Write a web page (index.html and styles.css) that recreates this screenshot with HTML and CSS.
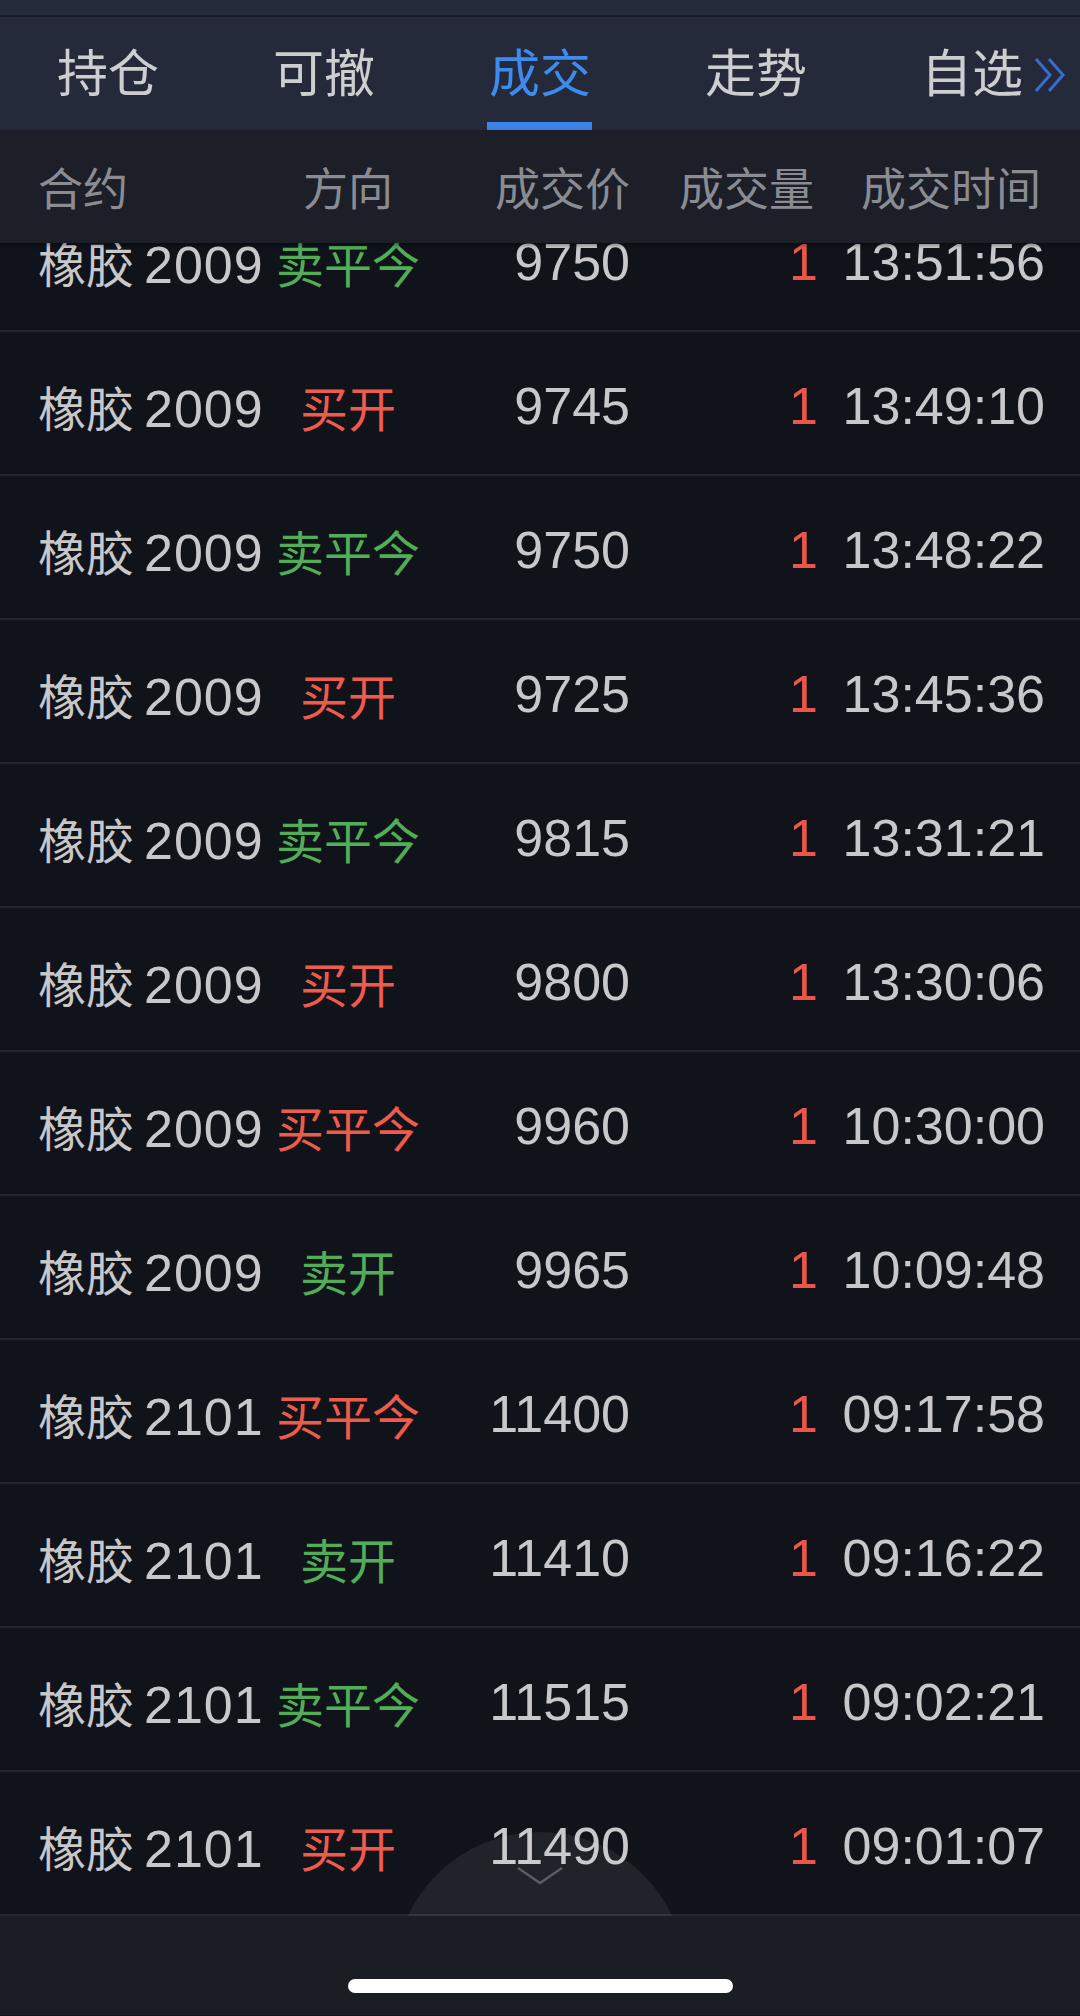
FILE: index.html
```html
<!DOCTYPE html>
<html lang="zh-CN">
<head>
    <meta charset="UTF-8">
    <meta name="viewport" content="width=device-width, initial-scale=1.0">
    <title>成交</title>
    <link rel="stylesheet" href="styles.css">
</head>
<body>
    <div class="status-strip"></div>

    <nav class="tabs">
        <div class="tab">持仓</div>
        <div class="tab">可撤</div>
        <div class="tab active">成交</div>
        <div class="tab">走势</div>
        <div class="tab">自选</div>
        <svg class="more" width="36" height="36" viewBox="0 0 36 36">
            <polyline points="4,2 18,18 4,34" fill="none" stroke="#3a6cd0" stroke-width="3"/>
            <polyline points="17,2 31,18 17,34" fill="none" stroke="#3a6cd0" stroke-width="3"/>
        </svg>
    </nav>

    <div class="thead">
        <div class="c-name">合约</div>
        <div class="c-dir">方向</div>
        <div class="c-price">成交价</div>
        <div class="c-vol">成交量</div>
        <div class="c-time">成交时间</div>
    </div>

    <div class="list">
        <div id="rows" class="rows"></div>
        <div class="pull">
            <svg width="48" height="20" viewBox="0 0 48 20">
                <polyline points="2,2 24,17 46,2" fill="none" stroke="#5a5d64" stroke-width="2.5"/>
            </svg>
        </div>
    </div>

    <div class="home">
        <div class="home-bar"></div>
    </div>

    <script>
        const trades = [
            ['2009', '卖平今', 'sell', '9750', '13:51:56'],
            ['2009', '买开', 'buy', '9745', '13:49:10'],
            ['2009', '卖平今', 'sell', '9750', '13:48:22'],
            ['2009', '买开', 'buy', '9725', '13:45:36'],
            ['2009', '卖平今', 'sell', '9815', '13:31:21'],
            ['2009', '买开', 'buy', '9800', '13:30:06'],
            ['2009', '买平今', 'buy', '9960', '10:30:00'],
            ['2009', '卖开', 'sell', '9965', '10:09:48'],
            ['2101', '买平今', 'buy', '11400', '09:17:58'],
            ['2101', '卖开', 'sell', '11410', '09:16:22'],
            ['2101', '卖平今', 'sell', '11515', '09:02:21'],
            ['2101', '买开', 'buy', '11490', '09:01:07']
        ];

        const rows = document.getElementById('rows');
        trades.forEach((t) => {
            const html = `
                <div class="row">
                    <div class="c-name">橡胶<span class="num code">${t[0]}</span></div>
                    <div class="c-dir ${t[2]}">${t[1]}</div>
                    <div class="c-price num">${t[3]}</div>
                    <div class="c-vol num">1</div>
                    <div class="c-time num">${t[4]}</div>
                </div>
            `;
            rows.insertAdjacentHTML('beforeend', html);
        });
    </script>
</body>
</html>
```

FILE: styles.css
```css
body {
    margin: 0;
    width: 1080px;
    height: 2016px;
    overflow: hidden;
    background-color: #10131a;
    font-family: "Liberation Sans", "Noto Sans CJK SC", sans-serif;
}

.status-strip {
    height: 15px;
    background-color: #262b3b;
    border-bottom: 2px solid #181c27;
}

.tabs {
    position: relative;
    display: flex;
    height: 113px;
    padding-bottom: 8px;
    box-sizing: border-box;
    background-color: #252a3a;
}

.tab {
    flex: 1;
    display: flex;
    align-items: center;
    justify-content: center;
    font-size: 51px;
    color: #cdcecf;
    position: relative;
}

.tab.active {
    color: #3d8bef;
}

.tab.active::after {
    content: "";
    position: absolute;
    left: 55px;
    right: 56px;
    bottom: -8px;
    height: 8px;
    background-color: #3b84e8;
}

.more {
    position: absolute;
    right: 12px;
    top: 40px;
}

.thead, .row {
    display: grid;
    grid-template-columns: 230px 160px 202px 188px 227px;
    padding: 0 35px 0 38px;
    align-items: center;
    white-space: nowrap;
}

.thead {
    position: relative;
    z-index: 2;
    height: 113px;
    background-color: #1c1f28;
    font-size: 45px;
    color: #8a8c92;
    box-shadow: 0 2px 4px rgba(0, 0, 0, 0.4);
}

.thead .c-vol, .thead .c-time {
    padding-right: 4px;
}

.c-dir {
    text-align: center;
}

.c-price, .c-vol, .c-time {
    text-align: right;
}

.list {
    position: relative;
    height: 1673px;
    overflow: hidden;
}

.rows {
    margin-top: -55px;
}

.row {
    height: 144px;
    padding-top: 6px;
    box-sizing: border-box;
    border-bottom: 2px solid #23262e;
    font-size: 48px;
    color: #c8c8cb;
}

.num {
    font-size: 52px;
}

.code {
    margin-left: 10px;
    letter-spacing: 1px;
}

.row .c-vol {
    color: #e8574a;
}

.buy {
    color: #ee5a4b;
}

.sell {
    color: #52ad58;
}

.pull {
    position: absolute;
    left: 394px;
    top: 1589px;
    width: 292px;
    height: 292px;
    border-radius: 50%;
    background-color: rgba(255, 255, 255, 0.07);
    display: flex;
    justify-content: center;
    padding-top: 34px;
    box-sizing: border-box;
}

.home {
    height: 99px;
    background-color: #1a1d24;
    display: flex;
    justify-content: center;
    padding-top: 63px;
    box-sizing: border-box;
}

.home-bar {
    width: 385px;
    height: 14px;
    border-radius: 7px;
    background-color: #ffffff;
}
```
